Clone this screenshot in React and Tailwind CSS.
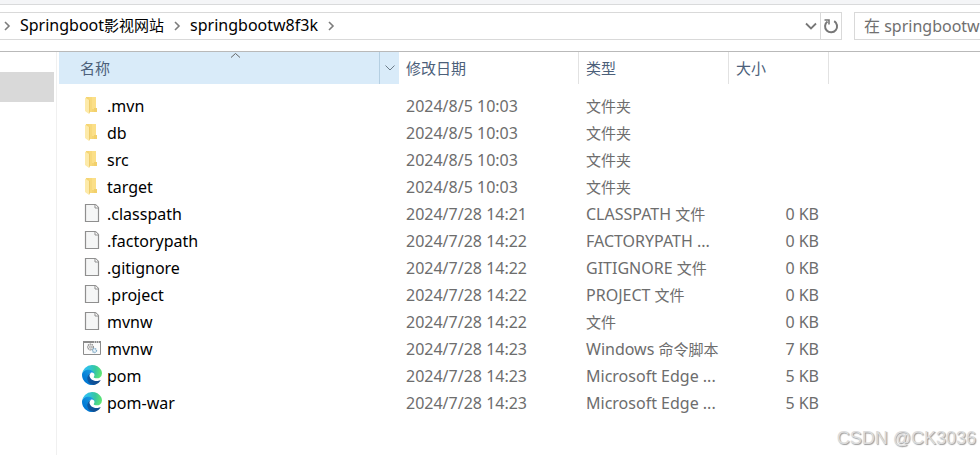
import { useId } from "react";

const files = [
  { icon: "folder", name: ".mvn", date: "2024/8/5 10:03", type: "文件夹", size: "" },
  { icon: "folder", name: "db", date: "2024/8/5 10:03", type: "文件夹", size: "" },
  { icon: "folder", name: "src", date: "2024/8/5 10:03", type: "文件夹", size: "" },
  { icon: "folder", name: "target", date: "2024/8/5 10:03", type: "文件夹", size: "" },
  { icon: "file", name: ".classpath", date: "2024/7/28 14:21", type: "CLASSPATH 文件", size: "0 KB" },
  { icon: "file", name: ".factorypath", date: "2024/7/28 14:22", type: "FACTORYPATH ...", size: "0 KB" },
  { icon: "file", name: ".gitignore", date: "2024/7/28 14:22", type: "GITIGNORE 文件", size: "0 KB" },
  { icon: "file", name: ".project", date: "2024/7/28 14:22", type: "PROJECT 文件", size: "0 KB" },
  { icon: "file", name: "mvnw", date: "2024/7/28 14:22", type: "文件", size: "0 KB" },
  { icon: "script", name: "mvnw", date: "2024/7/28 14:23", type: "Windows 命令脚本", size: "7 KB" },
  { icon: "edge", name: "pom", date: "2024/7/28 14:23", type: "Microsoft Edge ...", size: "5 KB" },
  { icon: "edge", name: "pom-war", date: "2024/7/28 14:23", type: "Microsoft Edge ...", size: "5 KB" },
];

// Chinese runs are set one step smaller than the Latin text around them.
function Mixed({ text }) {
  return text.split(/([\u4e00-\u9fff]+)/).filter(Boolean).map((part, i) =>
    /[\u4e00-\u9fff]/.test(part) ? <span key={i} className="text-[15px] leading-5">{part}</span> : part
  );
}

function FolderIcon() {
  return (
    <svg width="20" height="20" viewBox="0 0 20 20" aria-hidden="true">
      <path d="M4 2h10v15H4z" fill="#f5d573" />
      <path d="M9 2h5v12H9z" fill="#fbdf88" />
      <path d="M7 2h3v15H7z" fill="#f7d97c" />
      <path d="M12 13h3v4h-3z" fill="#f2d06c" />
      <path d="M3 2.500 7 5v14L3 16z" fill="#fdeaa9" />
      <path d="M7 5v14l.8-1.500V4.500z" fill="#eccb69" />
    </svg>
  );
}

function FileIcon() {
  return (
    <svg width="20" height="20" viewBox="0 0 20 20" aria-hidden="true">
      <path d="M3.500 1.500h10l3 3v14h-13z" fill="#f5f6f6" stroke="#8f8f8f" strokeWidth="1.200" />
      <path d="M13 1.500v3.500h3.500" fill="#fff" stroke="#8f8f8f" />
    </svg>
  );
}

function ScriptIcon() {
  return (
    <svg width="20" height="20" viewBox="0 0 20 20" aria-hidden="true">
      <path d="M1.500 3.500h17v13h-17z" fill="#fbfbfb" stroke="#8c8c8c" />
      <path d="M1 3h18v2H1z" fill="#8c8c8c" />
      <path d="M12 4h1M14 4h1M16 4h1" stroke="#fff" />
      <circle cx="8.500" cy="9" r="2.800" fill="#eee" stroke="#888" strokeWidth="1.300" strokeDasharray="1.300 .7" />
      <circle cx="8.500" cy="9" r="1" fill="#fff" stroke="#888" strokeWidth=".7" />
      <circle cx="12.500" cy="12.500" r="2" fill="#e7f2fa" stroke="#7fa9c5" strokeWidth="1.300" strokeDasharray="1.200 .6" />
    </svg>
  );
}

function EdgeIcon() {
  const id = useId();
  return (
    <svg width="20" height="20" viewBox="0 0 256 256" aria-hidden="true">
      <defs>
        <linearGradient id={`${id}a`} gradientUnits="userSpaceOnUse" x1="63" y1="177" x2="241" y2="177">
          <stop offset="0" stopColor="#0c59a4" />
          <stop offset="1" stopColor="#114a8b" />
        </linearGradient>
        <linearGradient id={`${id}b`} gradientUnits="userSpaceOnUse" x1="157" y1="100" x2="46" y2="221">
          <stop offset="0" stopColor="#1b9de2" />
          <stop offset=".16" stopColor="#1595df" />
          <stop offset=".67" stopColor="#0680d7" />
          <stop offset="1" stopColor="#0078d4" />
        </linearGradient>
        <radialGradient id={`${id}c`} gradientUnits="userSpaceOnUse" cx="30" cy="55" r="245">
          <stop offset="0" stopColor="#35c1f1" />
          <stop offset=".25" stopColor="#2fc2df" />
          <stop offset=".6" stopColor="#36c7a0" />
          <stop offset="1" stopColor="#66eb6e" />
        </radialGradient>
      </defs>
      <g transform="translate(-4.630 -4.920)">
        <path fill={`url(#${id}a)`} d="M235.680 199.460a93.730 93.730 0 0 1-10.540 4.710 101.870 101.870 0 0 1-35.900 6.460c-47.320 0-88.540-32.550-88.540-74.320A31.480 31.480 0 0 1 117.130 109c-42.800 1.800-53.800 46.400-53.800 72.530 0 73.880 68.090 81.370 82.760 81.370 7.910 0 19.840-2.300 27-4.560l1.310-.44a128.340 128.340 0 0 0 66.600-52.800 4 4 0 0 0-5.320-5.640z" />
        <path fill={`url(#${id}b)`} d="M110.340 246.340A79.200 79.200 0 0 1 87.600 225a80.720 80.720 0 0 1 29.530-120c3.120-1.470 8.450-4.130 15.540-4a32.350 32.350 0 0 1 25.690 13 31.880 31.880 0 0 1 6.360 18.660c0-.21 24.460-79.600-80-79.600-43.900 0-80 41.660-80 78.210a130.150 130.150 0 0 0 12.110 56 128 128 0 0 0 156.380 67.110 75.550 75.550 0 0 1-62.780-8z" />
        <path fill={`url(#${id}c)`} d="M156.940 153.780c-.81 1.050-3.300 2.500-3.300 5.660 0 2.610 1.700 5.120 4.720 7.230 14.380 10 41.490 8.680 41.560 8.680a59.560 59.560 0 0 0 30.270-8.350 61.380 61.380 0 0 0 30.430-52.880c.26-22.410-8-37.310-11.340-43.910C228.090 28.760 182.350 5 132.610 5a128 128 0 0 0-128 126.200c.48-36.540 36.800-66.050 80-66.050 3.500 0 23.460.34 42 10.070 16.340 8.580 24.900 18.940 30.850 29.210 6.180 10.670 7.280 24.150 7.280 29.520s-2.740 13.330-7.800 19.830z" />
      </g>
    </svg>
  );
}

const icons = { folder: FolderIcon, file: FileIcon, script: ScriptIcon, edge: EdgeIcon };

function Crumb() {
  return (
    <svg width="8" height="10" viewBox="0 0 8 10" className="shrink-0" aria-hidden="true">
      <path d="M2 1l4 4-4 4" fill="none" stroke="#7c7c7c" strokeWidth="1.600" />
    </svg>
  );
}

function AddressBar() {
  return (
    <div className="flex h-7">
      <nav aria-label="路径" className="flex min-w-0 flex-1 items-center border-y border-[#d9d9d9] pl-[3px] text-base leading-5 text-black">
        <Crumb />
        <a href="#parent" className="mx-[9px] whitespace-nowrap pb-[2px]"><Mixed text="Springboot影视网站" /></a>
        <Crumb />
        <a href="#current" className="mx-[9px] whitespace-nowrap pb-[2px]">springbootw8f3k</a>
        <Crumb />
        <button type="button" aria-label="以前的位置" className="ml-auto mr-px flex h-6 w-4 items-center justify-center">
          <svg width="12" height="8" viewBox="0 0 12 8" aria-hidden="true">
            <path d="M1 1.500l5 5 5-5" fill="none" stroke="#777" strokeWidth="1.800" />
          </svg>
        </button>
      </nav>
      <button type="button" aria-label="刷新" className="flex w-[22px] shrink-0 items-center justify-center border border-[#d9d9d9]">
        <svg width="16" height="16" viewBox="0 0 16 16" aria-hidden="true">
          <path d="M11.200 3.200A6 6 0 1 1 4.500 3.500" fill="none" stroke="#777" strokeWidth="2" />
          <path d="M1.500 2h4.500v4.500" fill="none" stroke="#777" strokeWidth="1.600" />
        </svg>
      </button>
      <input
        type="text"
        aria-label="搜索"
        placeholder="在 springbootw8f3k"
        className="ml-3 w-[126px] shrink-0 border border-r-0 border-[#d9d9d9] pl-[9px] text-base leading-5 outline-none placeholder:text-[#707070]"
      />
    </div>
  );
}

function FileTable() {
  return (
    <table className="w-[770px] table-fixed border-collapse text-left text-base leading-5 text-[#6d6d6d]">
      <colgroup>
        <col className="w-[340px]" />
        <col className="w-[180px]" />
        <col className="w-[150px]" />
        <col className="w-[100px]" />
      </colgroup>
      <thead className="text-[15px] text-[#4c607a]">
        <tr className="h-8">
          <th aria-sort="ascending" className="bg-[#d9ebf9] p-0 font-normal">
            <div className="relative flex h-8">
              <button type="button" className="flex-1 pl-[21px] text-left">名称</button>
              <svg className="absolute left-[171px] top-0" width="11" height="7" viewBox="0 0 11 7" aria-hidden="true">
                <path d="M1 5.500l4.500-4 4.500 4" fill="none" stroke="#666" />
              </svg>
              <button type="button" aria-label="筛选名称" className="flex w-5 items-center justify-center border-l border-[#b5cfe2]">
                <svg width="10" height="6" viewBox="0 0 10 6" aria-hidden="true">
                  <path d="M.5.5l4.500 4.500L9.500.5" fill="none" stroke="#6b7b88" />
                </svg>
              </button>
            </div>
          </th>
          {["修改日期", "类型", "大小"].map((label) => (
            <th key={label} className="p-0 font-normal">
              <button type="button" className="block h-8 w-full border-r border-[#e2e2e2] pl-[7px] text-left">{label}</button>
            </th>
          ))}
        </tr>
      </thead>
      <tbody className="before:block before:h-2">
        {files.map((file) => {
          const Icon = icons[file.icon];
          return (
            <tr key={file.name + file.type} className="h-[27px]">
              <td className="p-0 text-black">
                <div className="flex items-center gap-[5px] pl-[23px]">
                  <span className="pb-[2px]"><Icon /></span>
                  <span>{file.name}</span>
                </div>
              </td>
              <td className="p-0 pl-[7px]">{file.date}</td>
              <td className="whitespace-nowrap p-0 pl-[7px]"><Mixed text={file.type} /></td>
              <td className="p-0 pr-[10px] text-right">{file.size}</td>
            </tr>
          );
        })}
      </tbody>
    </table>
  );
}

export default function App() {
  return (
    <div className="relative flex min-h-screen flex-col overflow-hidden bg-white font-['Noto_Sans','Noto_Sans_CJK_SC',sans-serif]">
      <div className="h-[5px] border-b border-[#d9dadb] bg-[#f4f5f7]" />
      <header className="border-b border-[#b9b9b9] pb-[11px] pt-[7px]">
        <AddressBar />
      </header>
      <div className="flex flex-1">
        <aside className="w-[57px] shrink-0 border-r border-[#f0f0f0] pr-[2px] pt-5">
          <div className="h-[30px] bg-[#d9d9d9]" />
        </aside>
        <main className="min-w-0 flex-1 pl-[2px]">
          <FileTable />
        </main>
      </div>
      <div className="absolute bottom-[5px] right-1 font-['Liberation_Sans',sans-serif] text-lg leading-6 text-[#dcdcdc] [text-shadow:1px_1px_1px_#999]">
        CSDN @CK3036
      </div>
    </div>
  );
}
